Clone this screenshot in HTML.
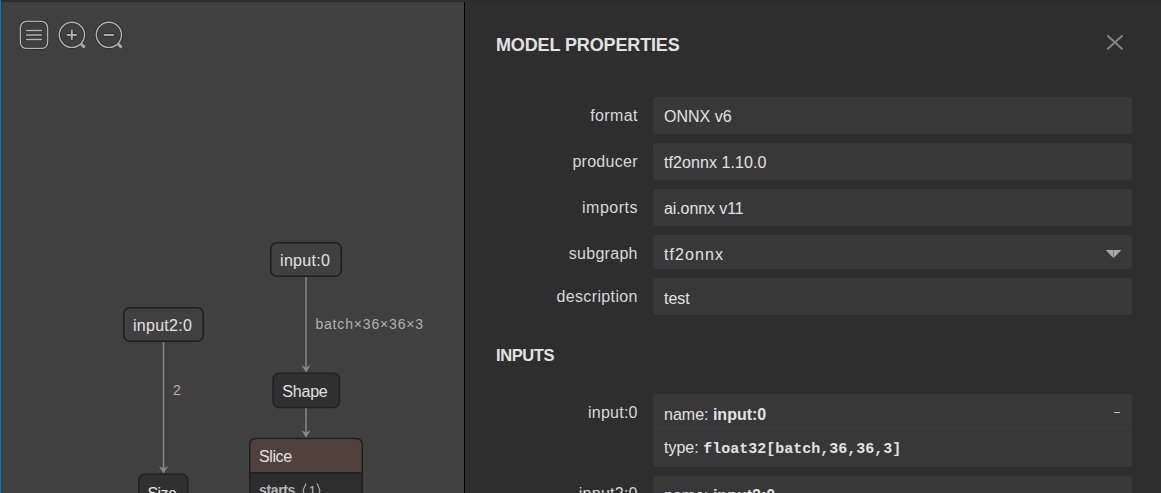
<!DOCTYPE html>
<html>
<head>
<meta charset="utf-8">
<style>
html,body{margin:0;padding:0;}
body{width:1161px;height:493px;overflow:hidden;position:relative;background:#404040;font-family:"Liberation Sans",sans-serif;}
.abs{position:absolute;white-space:nowrap;line-height:1;}
#topbar{position:absolute;left:0;top:0;width:1161px;height:2px;background:#2b2c2f;}
#blue{position:absolute;left:0;top:0;width:1px;height:493px;background:#0078d7;}
#brown{position:absolute;left:1px;top:2px;width:1px;height:491px;background:#423c39;}
#vline{position:absolute;left:464px;top:2px;width:1px;height:491px;background:#000;}
#sidebar{position:absolute;left:465px;top:2px;width:696px;height:491px;background:#2e2e2e;}
.box{position:absolute;left:653px;width:479px;background:#383838;border-radius:3px;}
.lbl{position:absolute;right:523.5px;font-size:16px;color:#d8d8d8;line-height:1;white-space:nowrap;}
.val{position:absolute;left:664px;font-size:16px;color:#e2e2e2;line-height:1;white-space:nowrap;}
.hdr{position:absolute;left:496px;font-weight:bold;color:#e2e2e2;line-height:1;white-space:nowrap;}
.gt{position:absolute;font-size:16px;color:#e2e2e2;line-height:1;white-space:nowrap;}
.el{position:absolute;font-size:14px;color:#b2b2b2;line-height:1;white-space:nowrap;}
</style>
</head>
<body>
<div id="topbar"></div>
<div id="blue"></div>
<div id="brown"></div>
<div id="vline"></div>
<div id="sidebar"></div>

<!-- toolbar icons -->
<svg class="abs" style="left:0;top:0" width="140" height="60">
  <g fill="none" stroke="#2c2c2c" stroke-width="3" stroke-linecap="round">
    <rect x="20.4" y="21.4" width="27.2" height="27" rx="6" ry="6"/>
    <line x1="26.5" y1="30.5" x2="41.5" y2="30.5"/>
    <line x1="26.5" y1="35" x2="41.5" y2="35"/>
    <line x1="26.5" y1="39.5" x2="41.5" y2="39.5"/>
    <circle cx="71.9" cy="34.8" r="12.6"/>
    <circle cx="108.9" cy="34.8" r="12.6"/>
  </g>
  <g fill="none" stroke="#2c2c2c" stroke-width="3.8" stroke-linecap="round">
    <line x1="71.8" y1="30.6" x2="71.8" y2="39.2"/>
    <line x1="67.5" y1="34.9" x2="76.1" y2="34.9"/>
    <line x1="104.5" y1="34.9" x2="113.3" y2="34.9"/>
  </g>
  <g fill="none" stroke="#b4b4b4" stroke-width="1.4" stroke-linecap="round">
    <rect x="20.4" y="21.4" width="27.2" height="27" rx="6" ry="6"/>
    <line x1="26.5" y1="30.5" x2="41.5" y2="30.5"/>
    <line x1="26.5" y1="35" x2="41.5" y2="35"/>
    <line x1="26.5" y1="39.5" x2="41.5" y2="39.5"/>
    <circle cx="71.9" cy="34.8" r="12.6"/>
    <circle cx="108.9" cy="34.8" r="12.6"/>
  </g>
  <g fill="none" stroke="#acacac" stroke-width="2" stroke-linecap="round">
    <line x1="71.8" y1="30.6" x2="71.8" y2="39.2"/>
    <line x1="67.5" y1="34.9" x2="76.1" y2="34.9"/>
    <line x1="104.5" y1="34.9" x2="113.3" y2="34.9"/>
  </g>
  <g stroke="#a8a8a8" stroke-width="3" stroke-linecap="butt">
    <line x1="80.6" y1="43.5" x2="84.6" y2="47.5"/>
    <line x1="117.6" y1="43.5" x2="121.6" y2="47.5"/>
  </g>
</svg>

<!-- graph -->
<svg class="abs" style="left:0;top:0" width="465" height="493">
  <g stroke="#888888" stroke-width="1.5" fill="none">
    <line x1="306" y1="277" x2="306" y2="368"/>
    <line x1="306" y1="408" x2="306" y2="433"/>
    <line x1="163.5" y1="342" x2="163.5" y2="469"/>
  </g>
  <g fill="#888888">
    <path d="M306 372.5 L301.5 365.2 L306 367.5 L310.5 365.2 Z"/>
    <path d="M306 437.8 L301.5 430.3 L306 432.6 L310.5 430.3 Z"/>
    <path d="M163.5 473.5 L159 466.2 L163.5 468.5 L168 466.2 Z"/>
  </g>
  <rect x="270.75" y="242.75" width="70.5" height="33.5" rx="6" ry="6" fill="#404040" stroke="#1f1f1f" stroke-width="1.7"/>
  <rect x="123.75" y="307.75" width="79.5" height="33.5" rx="6" ry="6" fill="#404040" stroke="#1f1f1f" stroke-width="1.7"/>
  <rect x="273.1" y="373.3" width="66.4" height="34.1" rx="6" ry="6" fill="#303030" stroke="#202020" stroke-width="1.5"/>
  <path d="M249.75 520 L249.75 445.1 Q249.75 438.6 256.25 438.6 L355.75 438.6 Q362.25 438.6 362.25 445.1 L362.25 520 Z" fill="#2d2d2d" stroke="#1f1f1f" stroke-width="1.5"/>
  <path d="M250.5 472 L250.5 445.3 Q250.5 439.3 256.5 439.3 L355.5 439.3 Q361.5 439.3 361.5 445.3 L361.5 472 Z" fill="#51413c"/>
  <rect x="250.5" y="472" width="111" height="1.5" fill="#1f1f1f"/>
  <path d="M138.75 520 L138.75 480.75 Q138.75 474.25 145.25 474.25 L181.25 474.25 Q187.75 474.25 187.75 480.75 L187.75 520 Z" fill="#303030" stroke="#202020" stroke-width="1.5"/>
  <!-- angle brackets of starts -->
  <g fill="none" stroke="#b2b2b2" stroke-width="1.1">
    <polyline points="306,483.5 303,490.5 306,497.5"/>
    <polyline points="317,483.5 320,490.5 317,497.5"/>
  </g>
</svg>
<div id="t_g_input0" class="gt" style="left:280px;top:253px;letter-spacing:0.33px">input:0</div>
<div id="t_g_input2" class="gt" style="left:133px;top:318px;letter-spacing:0.28px">input2:0</div>
<div id="t_g_shape" class="gt" style="left:282.3px;top:384px;letter-spacing:-0.2px">Shape</div>
<div id="t_g_slice" class="gt" style="left:259px;top:449px;letter-spacing:-0.4px">Slice</div>
<div id="t_g_size" class="gt" style="left:147.5px;top:486px;letter-spacing:-0.6px">Size</div>
<div id="t_e_batch" class="el" style="left:315.4px;top:316.5px;letter-spacing:0.83px">batch×36×36×3</div>
<div id="t_e_2" class="el" style="left:173px;top:383px">2</div>
<div id="t_starts" class="gt" style="left:259px;top:483px;font-size:14px;color:#b8b8b8;font-weight:bold;letter-spacing:-0.35px">starts</div>
<div id="t_one" class="gt" style="left:308.5px;top:484px;font-size:14px;color:#b2b2b2">1</div>

<!-- sidebar -->
<div id="t_hdr1" class="hdr" style="top:36px;font-size:18px;letter-spacing:-0.13px">MODEL PROPERTIES</div>
<svg class="abs" style="left:1100px;top:28px" width="30" height="30" viewBox="0 0 30 30">
  <g stroke="#858585" stroke-width="2">
    <line x1="7.3" y1="7.6" x2="22.5" y2="21.3"/>
    <line x1="22.5" y1="7.6" x2="7.3" y2="21.3"/>
  </g>
</svg>

<div class="box" style="top:97px;height:37px"></div>
<div class="box" style="top:143px;height:37px"></div>
<div class="box" style="top:189px;height:37px"></div>
<div class="box" style="top:235px;height:34px"></div>
<div class="box" style="top:278px;height:37px"></div>
<div class="box" style="top:394px;height:73px"></div>
<div class="abs" style="left:654px;top:430px;width:477px;height:1px;background:#333333"></div>
<div class="box" style="top:476px;height:73px"></div>

<div id="t_l_format" class="lbl" style="top:108px;letter-spacing:0.4px;margin-right:-0.4px">format</div>
<div id="t_l_producer" class="lbl" style="top:154px;letter-spacing:0.28px;margin-right:-0.28px">producer</div>
<div id="t_l_imports" class="lbl" style="top:200px;letter-spacing:0.5px;margin-right:-0.5px">imports</div>
<div id="t_l_subgraph" class="lbl" style="top:246px;letter-spacing:0.28px;margin-right:-0.28px">subgraph</div>
<div id="t_l_description" class="lbl" style="top:289px;letter-spacing:0.37px;margin-right:-0.37px">description</div>
<div id="t_l_input0" class="lbl" style="top:405px;letter-spacing:0.23px;margin-right:-0.23px">input:0</div>
<div id="t_l_input20" class="lbl" style="top:486px;letter-spacing:0.25px;margin-right:-0.25px">input2:0</div>

<div id="t_v_0" class="val" style="top:109px">ONNX v6</div>
<div id="t_v_1" class="val" style="top:155px;letter-spacing:0.08px">tf2onnx 1.10.0</div>
<div id="t_v_2" class="val" style="top:201px;letter-spacing:-0.1px">ai.onnx v11</div>
<div id="t_v_3" class="val" style="top:247px;letter-spacing:1.1px">tf2onnx</div>
<div id="t_v_4" class="val" style="top:291px">test</div>
<svg class="abs" style="left:1104px;top:249px" width="20" height="10" viewBox="0 0 20 10">
  <path d="M1.8 1 L9.3 9 L9.3 1 Z M9.7 1 L9.7 9 L17.3 1 Z" fill="#aaaaaa"/>
</svg>

<div id="t_hdr2" class="hdr" style="top:347px;font-size:16.5px;letter-spacing:-0.4px">INPUTS</div>
<div id="t_v_name" class="val" style="top:407px">name: <b>input:0</b></div>
<div id="t_v_type" class="val" style="top:440px">type: <b style="font-family:'Liberation Mono',monospace;font-size:15px">float32[batch,36,36,3]</b></div>
<div class="abs" style="left:1114px;top:412px;width:6px;height:1px;background:#c4c4c4"></div>
<div id="t_v_name2" class="val" style="top:488px">name: <b>input2:0</b></div>
</body>
</html>
